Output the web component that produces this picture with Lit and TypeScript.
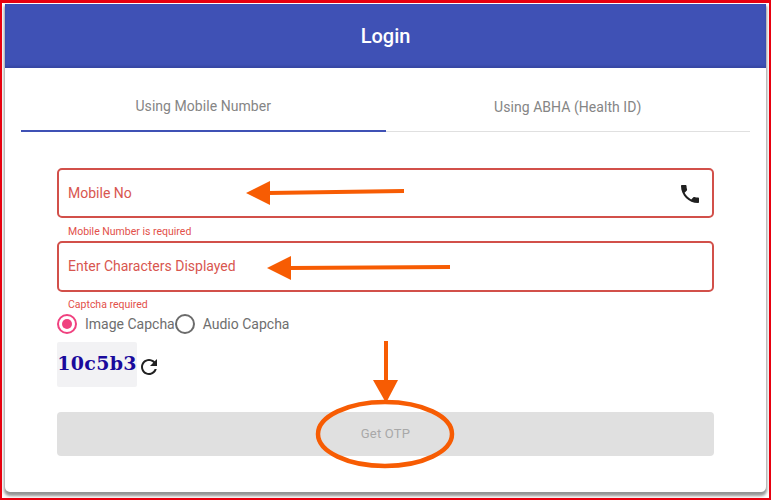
import { LitElement, html, css, svg } from "lit";
import { customElement } from "lit/decorators.js";

@customElement("app-root")
export class AppRoot extends LitElement {
  static styles = css`
    :host { display: block; width: 771px; height: 500px; font-family: Roboto, "Liberation Sans", sans-serif; }
    * { box-sizing: border-box; }
    .frame { position: relative; width: 771px; height: 500px; border: 2px solid #e8000f; border-top-width: 3px; background: #fff; padding: 1px 3px 6px 3px; overflow: hidden; }
    .card { height: 100%; background: #fff; border-radius: 0 0 5px 5px; box-shadow: 0 3px 3px 1px rgba(0,0,0,.42); display: flex; flex-direction: column; }
    .head { height: 64px; flex: none; background: #3f51b5; color: #fff; font-size: 20px; font-weight: 500; display: flex; align-items: center; justify-content: center; box-shadow: inset 0 -2px 2px rgba(30,40,110,.25); }
    .tabs { display: flex; margin: 0 16px; height: 64px; flex: none; border-bottom: 1px solid #e0e0e0; }
    .tab { flex: 1; display: flex; align-items: center; justify-content: center; color: #858585; font-size: 14px; letter-spacing: .05px; padding-top: 15px; }
    .tab.on { border-bottom: 2px solid #3f51b5; margin-bottom: -1px; padding-top: 14px; }
    .form { padding: 36px 52px 0 52px; display: flex; flex-direction: column; }
    .field { height: 51px; border: 2px solid #d2504a; border-radius: 5px; display: flex; align-items: center; justify-content: space-between; padding: 0 10px 0 9px; color: #d8564f; font-size: 14px; flex: none; }
    .field.mobile { height: 50px; }
    .field.captcha-field { padding-bottom: 2px; }
    .field svg { width: 24px; height: 24px; fill: #202020; margin-top: 2px; }
    .hint { color: #e2504a; font-size: 10.5px; line-height: 12px; padding-left: 11px; }
    .hint.one { margin-top: 7px; margin-bottom: 4px; transform: translateY(1px); }
    .hint.two { margin-top: 6px; transform: translateY(1px); }
    .radios { display: flex; align-items: center; height: 24px; margin-top: 2px; color: #6e6e6e; font-size: 14px; }
    .radio { width: 20px; height: 20px; flex: none; border-radius: 50%; border: 2px solid #6b6b6b; display: flex; align-items: center; justify-content: center; }
    .radio.on { border-color: #f0417f; margin-right: 8px; }
    .radio.on::after { content: ""; width: 10px; height: 10px; border-radius: 50%; background: #f0417f; }
    .radio.off { margin-right: 8px; }
    .captcha { display: flex; align-items: center; margin-top: 6px; }
    .cimg { width: 80px; height: 45px; padding-bottom: 3px; background: #f2f2f4; border-radius: 2px; display: flex; align-items: center; justify-content: center; color: #1a0a9c; font-family: "DejaVu Serif", "Liberation Serif", serif; font-weight: 700; font-size: 19px; letter-spacing: .3px; white-space: nowrap; }
    .refresh { width: 24px; height: 24px; fill: #222; margin-top: 4px; }
    .btn { height: 44px; margin-top: 25px; padding-bottom: 1px; background: #e0e0e0; border-radius: 4px; color: #a8a8a8; font-size: 13px; font-weight: 400; letter-spacing: .2px; display: flex; align-items: center; justify-content: center; }
    .marks { position: absolute; left: -2px; top: -3px; width: 771px; height: 500px; pointer-events: none; }
    .marks .s { stroke: #f75c03; fill: none; }
    .marks .f { fill: #f75c03; }
  `;

  render() {
    return html`
      <div class="frame">
        <div class="card">
          <div class="head">Login</div>
          <div class="tabs">
            <div class="tab on">Using Mobile Number</div>
            <div class="tab">Using ABHA (Health ID)</div>
          </div>
          <div class="form">
            <div class="field mobile">
              <span>Mobile No</span>
              <svg viewBox="0 0 24 24"><path d="M6.62 10.79c1.44 2.83 3.76 5.14 6.59 6.59l2.2-2.2c.27-.27.67-.36 1.02-.24 1.12.37 2.33.57 3.57.57.55 0 1 .45 1 1V20c0 .55-.45 1-1 1-9.39 0-17-7.61-17-17 0-.55.45-1 1-1h3.5c.55 0 1 .45 1 1 0 1.25.2 2.45.57 3.57.11.35.03.74-.25 1.02l-2.2 2.2z"/></svg>
            </div>
            <div class="hint one">Mobile Number is required</div>
            <div class="field captcha-field"><span>Enter Characters Displayed</span></div>
            <div class="hint two">Captcha required</div>
            <div class="radios">
              <span class="radio on"></span><span>Image Capcha</span>
              <span class="radio off"></span><span>Audio Capcha</span>
            </div>
            <div class="captcha">
              <div class="cimg">10c5b3</div>
              <svg class="refresh" viewBox="0 0 24 24"><path d="M17.65 6.35C16.2 4.9 14.21 4 12 4c-4.42 0-7.99 3.58-7.99 8s3.57 8 7.99 8c3.73 0 6.84-2.55 7.73-6h-2.08c-.82 2.33-3.04 4-5.65 4-3.31 0-6-2.69-6-6s2.69-6 6-6c1.66 0 3.14.69 4.22 1.78L13 11h7V4l-2.35 2.35z"/></svg>
            </div>
            <div class="btn">Get OTP</div>
          </div>
        </div>
        <svg class="marks" viewBox="0 0 771 500">
          ${svg`
            <path class="s" stroke-width="4" d="M268 193 L404 191"/>
            <polygon class="f" points="246,193 270,181 270,205"/>
            <path class="s" stroke-width="4" d="M290 268 L450 267"/>
            <polygon class="f" points="267,268 291,256 291,280"/>
            <path class="s" stroke-width="4" d="M386 341 L386 382"/>
            <polygon class="f" points="373,380 398,380 386,403"/>
            <ellipse class="s" stroke-width="4.5" cx="385" cy="434" rx="67" ry="32"/>
          `}
        </svg>
      </div>
    `;
  }
}
